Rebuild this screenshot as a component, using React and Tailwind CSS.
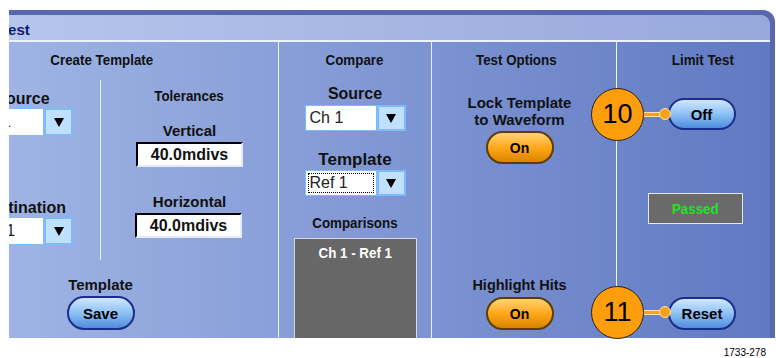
import React from "react";

function Arrow() {
  return (
    <svg width="10" height="9" viewBox="0 0 10 9">
      <polygon points="0,0 10,0 5,9" fill="#000" />
    </svg>
  );
}

function H({ children, className = "" }) {
  return (
    <div className={`text-[15px] font-bold leading-[16px] text-center ${className}`}>
      <span className="inline-block scale-x-[0.89]">{children}</span>
    </div>
  );
}

function Dropdown({ value, focus, tall }) {
  return (
    <div className={`flex w-[101px] ${tall ? "h-[28px]" : "h-[26px]"}`}>
      <div className="flex-1 bg-white border border-[#7cbcfc] flex items-center pl-[2px] pr-[2px]">
        <div
          className={`flex items-center w-full h-[20px] pl-[1px] ${
            focus ? "border border-dotted border-black" : "border border-transparent"
          }`}
        >
          <span className="text-[16px] leading-none text-[#222] font-normal">{value}</span>
        </div>
      </div>
      <div className="w-[29px] bg-[#c0e0fe] border-2 border-[#7cbcfc] flex items-center justify-center">
        <Arrow />
      </div>
    </div>
  );
}

function Field({ value }) {
  return (
    <div className="w-[107px] h-[25px] bg-white border-2 border-t-black border-l-black border-r-[#e4ecfa] border-b-[#e4ecfa] flex items-center justify-center text-[16px] font-bold leading-none">
      {value}
    </div>
  );
}

function BluePill({ label, className }) {
  return (
    <div
      className={`w-[68px] rounded-full border-2 border-[#1c2c8c] bg-linear-to-b from-[#cfe7ff] via-[#8dc1f4] to-[#4f8cdc] flex items-center justify-center text-[15px] font-bold leading-none text-black ${className}`}
    >
      {label}
    </div>
  );
}

function OrangePill({ className }) {
  return (
    <div
      className={`w-[68px] h-[33px] rounded-full border-2 border-[#5c3d05] bg-linear-to-b from-[#ffd36a] via-[#ffa818] to-[#da8300] flex items-center justify-center text-[14px] font-bold leading-none text-black ${className}`}
    >
      On
    </div>
  );
}

function Divider() {
  return <div className="w-px shrink-0 bg-[#eef2fc]" />;
}

function Badge({ n, top }) {
  return (
    <>
      <div
        className="absolute left-[642px] h-[5px] w-[20px] bg-[#f7a21b] border-y border-[#ffe2a8]"
        style={{ top: top + 24 }}
      />
      <div
        className="absolute left-[659px] w-[12px] h-[12px] rounded-full bg-[#f7a21b] border border-[#ffe2a8]"
        style={{ top: top + 20 }}
      />
      <div
        className="absolute left-[591px] w-[53px] h-[53px] rounded-full bg-[#ff9e0d] border-[1.5px] border-[#2a2010] flex items-center justify-center text-[27px] leading-none text-black"
        style={{ top }}
      >
        {n}
      </div>
    </>
  );
}

export default function App() {
  return (
    <div className="relative w-[776px] h-[358px] bg-white overflow-hidden font-['Liberation_Sans',Arial,sans-serif] text-[#111]">
      <div className="ml-[9px] mt-[10px] w-[766px] h-[328px] bg-[#5867ae] rounded-tr-[12px] pt-[5px] pr-[5px] flex flex-col overflow-hidden">
        <div className="h-[25px] shrink-0 rounded-tr-[9px] bg-linear-to-r from-[#b5c5ec] to-[#97a8db] flex items-center">
          <span className="ml-[-9px] pt-[3px] text-[15px] font-bold leading-none text-[#0e1c78]">Test</span>
        </div>
        <div className="h-[2px] shrink-0 bg-[#eef2fc]" />
        <div className="flex-1 flex bg-linear-to-r from-[#9fb4e4] to-[#6179c2] overflow-hidden">
          {/* Create Template */}
          <div className="ml-[-61px] w-[330px] shrink-0 flex flex-col pt-[10px]">
            <H className="pr-[22px]">Create Template</H>
            <div className="mt-[12px] h-[180px] flex">
              <div className="w-[152px] pr-[3px] flex flex-col items-center pt-[10px]">
                <div className="text-[16px] font-bold leading-[18px]">Source</div>
                <Dropdown value="Ch 1" tall />
                <div className="mt-[63px] text-[16px] font-bold leading-[18px]">Destination</div>
                <Dropdown value="Ref 1" tall />
              </div>
              <Divider />
              <div className="flex-1 flex flex-col items-center pt-[8px]">
                <H>Tolerances</H>
                <div className="mt-[18px] text-[15px] font-bold leading-[18px]">Vertical</div>
                <div className="mt-[2px]">
                  <Field value="40.0mdivs" />
                </div>
                <div className="mt-[26px] text-[15px] font-bold leading-[18px]">Horizontal</div>
                <div className="mt-[2px] mr-[2px]">
                  <Field value="40.0mdivs" />
                </div>
              </div>
            </div>
            <div className="mt-[16px] pr-[25px] flex flex-col items-center">
              <div className="text-[15px] font-bold leading-[18px]">Template</div>
              <BluePill label="Save" className="mt-[2px] h-[34px] w-[67px]" />
            </div>
          </div>
          <Divider />
          {/* Compare */}
          <div className="w-[152px] shrink-0 flex flex-col items-center pt-[10px]">
            <H>Compare</H>
            <div className="mt-[17px] text-[16px] font-bold leading-[18px]">Source</div>
            <div className="mt-[2px]">
              <Dropdown value="Ch 1" />
            </div>
            <div className="mt-[19px] text-[17px] font-bold leading-[20px]">Template</div>
            <Dropdown value="Ref 1" focus />
            <H className="mt-[19px]">Comparisons</H>
            <div className="mt-[7px] w-[123px] flex-1 bg-[#676767] border border-b-0 border-[#d8d8d8] text-white pt-[6px]">
              <H>Ch 1 - Ref 1</H>
            </div>
          </div>
          <Divider />
          {/* Test Options */}
          <div className="w-[184px] shrink-0 flex flex-col items-center pt-[10px] pr-[9px]">
            <H className="mr-[6px]">Test Options</H>
            <div className="mt-[26px] text-center text-[15px] font-bold leading-[17px]">
              Lock Template
              <br />
              to Waveform
            </div>
            <OrangePill className="mt-[3px]" />
            <div className="mt-[112px] text-[14.5px] font-bold leading-[18px]">Highlight Hits</div>
            <OrangePill className="mt-[3px]" />
          </div>
          <Divider />
          {/* Limit Test */}
          <div className="w-[153px] shrink-0 flex flex-col items-center pt-[10px]">
            <H className="ml-[18px]">Limit Test</H>
            <BluePill label="Off" className="mt-[30px] ml-[16px] h-[32px]" />
            <div className="mt-[63px] ml-[3px] w-[95px] h-[31px] bg-[#6a6a6a] border-[1.5px] border-[#e8e8e8] flex items-center justify-center text-[#1ee61e]">
              <H>Passed</H>
            </div>
            <BluePill label="Reset" className="mt-[73px] ml-[17px] h-[33px]" />
          </div>
        </div>
      </div>
      <div className="mt-[9px] pr-[10px] text-right text-[10px] leading-[12px] text-black">1733-278</div>
      <Badge n="10" top={88} />
      <Badge n="11" top={286} />
    </div>
  );
}
